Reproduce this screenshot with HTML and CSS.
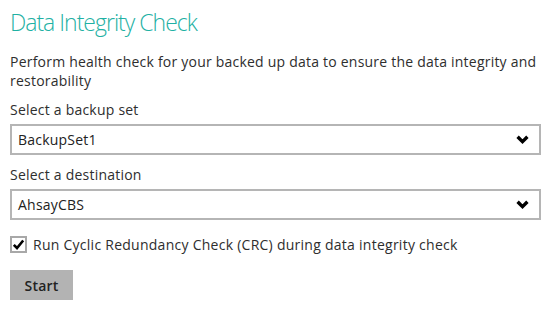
FILE: index.html
```html
<!DOCTYPE html>
<html>
<head>
<meta charset="utf-8">
<link rel="stylesheet" href="styles.css">
</head>
<body>
<div class="page">
  <h1 class="title">Data Integrity Check</h1>
  <p class="desc">Perform health check for your backed up data to ensure the data integrity and restorability</p>
  <div class="label">Select a backup set</div>
  <div class="select">
    <span class="value">BackupSet1</span>
    <svg class="chev" width="13" height="9" viewBox="0 0 13 9"><polyline points="1.6,1.8 6.5,6.6 11.4,1.8" fill="none" stroke="#000" stroke-width="3.4"/></svg>
  </div>
  <div class="label label-2">Select a destination</div>
  <div class="select">
    <span class="value">AhsayCBS</span>
    <svg class="chev" width="13" height="9" viewBox="0 0 13 9"><polyline points="1.6,1.8 6.5,6.6 11.4,1.8" fill="none" stroke="#000" stroke-width="3.4"/></svg>
  </div>
  <div class="check-row">
    <span class="checkbox"><svg width="13" height="13" viewBox="0 0 13 13"><polyline points="1.8,6.8 5,10 11.2,2.5" fill="none" stroke="#000" stroke-width="2.6"/></svg></span>
    <span class="check-label">Run Cyclic Redundancy Check (CRC) during data integrity check</span>
  </div>
  <button class="btn">Start</button>
</div>
</body>
</html>
```

FILE: styles.css
```css
html, body {
  margin: 0;
  padding: 0;
  background: #fff;
}
.page {
  padding: 6px 8px 0 10px;
  font-family: "Open Sans", "Noto Sans", sans-serif;
  font-size: 14px;
  letter-spacing: 0.22px;
  color: #2e2e2e;
}
.title {
  margin: 0;
  font-size: 23px;
  font-weight: 300;
  letter-spacing: -1px;
  line-height: 33px;
  color: #1fb1a4;
}
.desc {
  margin: 13px 0 0 0;
  line-height: 19px;
}
.label {
  margin-top: 10px;
  line-height: 19px;
}
.label-2 {
  margin-top: 10px;
}
.select {
  margin-top: 5px;
  display: flex;
  align-items: center;
  justify-content: space-between;
  border: 2px solid #b5b5b5;
  padding: 4px 10px 4px 6px;
  line-height: 19px;
  height: 19px;
  color: #222;
}
.chev {
  display: block;
}
.check-row {
  margin-top: 15px;
  display: flex;
  align-items: center;
  gap: 6px;
  line-height: 19px;
  letter-spacing: 0.26px;
}
.checkbox {
  width: 13px;
  height: 13px;
  border: 2px solid #a8a8a8;
  background: #fff;
  display: flex;
  align-items: center;
  justify-content: center;
}
.checkbox svg {
  display: block;
}
.btn {
  margin-top: 16px;
  display: block;
  width: 63px;
  height: 30px;
  border: none;
  background: #b3b3b3;
  font-family: "Open Sans", "Noto Sans", sans-serif;
  font-size: 14px;
  font-weight: 600;
  letter-spacing: 0.2px;
  color: #222;
  padding: 0;
}
```
